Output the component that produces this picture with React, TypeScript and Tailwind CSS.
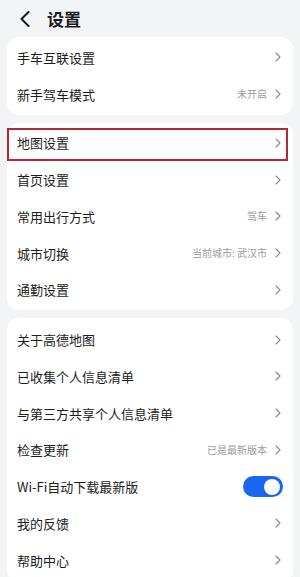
import React from 'react'

type Row = {
  label: string
  value?: string
  toggle?: boolean
  marked?: boolean
}

const groupOne: Row[] = [
  { label: '手车互联设置' },
  { label: '新手驾车模式', value: '未开启' },
]

const groupTwo: Row[] = [
  { label: '地图设置', marked: true },
  { label: '首页设置' },
  { label: '常用出行方式', value: '驾车' },
  { label: '城市切换', value: '当前城市: 武汉市' },
  { label: '通勤设置' },
]

const groupThree: Row[] = [
  { label: '关于高德地图' },
  { label: '已收集个人信息清单' },
  { label: '与第三方共享个人信息清单' },
  { label: '检查更新', value: '已是最新版本' },
  { label: 'Wi-Fi自动下载最新版', toggle: true },
  { label: '我的反馈' },
  { label: '帮助中心' },
]

function Chevron() {
  return (
    <svg width="6" height="10" viewBox="0 0 6 10" fill="none" className="shrink-0">
      <path d="M1 1l4 4-4 4" stroke="#8a8a8a" strokeWidth="1.1" strokeLinecap="round" strokeLinejoin="round" />
    </svg>
  )
}

function Toggle() {
  return (
    <div className="w-[40px] h-[21px] rounded-full bg-[#1b66ef] flex items-center justify-end pr-[3px] shrink-0">
      <div className="w-[16px] h-[16px] rounded-full bg-white" />
    </div>
  )
}

function SettingRow({ row }: { row: Row }) {
  return (
    <div className="relative h-[36.75px] flex items-center justify-between pl-[10px] pr-[12px]">
      <span className="text-[13px] text-[#1c1c1c] leading-none">{row.label}</span>
      {row.toggle ? (
        <div className="-mr-[2px]"><Toggle /></div>
      ) : (
        <div className="flex items-center gap-[8px]">
          {row.value && <span className="text-[10px] text-[#9b9b9b] leading-none">{row.value}</span>}
          <Chevron />
        </div>
      )}
      {row.marked && (
        <span className="absolute left-0 right-[5px] top-[3px] bottom-0 border-2 border-[#b8262e]" />
      )}
    </div>
  )
}

function Card({ rows, className }: { rows: Row[]; className?: string }) {
  return (
    <div className={`bg-white rounded-xl ${className ?? ''}`}>
      {rows.map((r) => (
        <SettingRow key={r.label} row={r} />
      ))}
    </div>
  )
}

export default function App() {
  return (
    <div
      className="w-[300px] h-[577px] overflow-hidden bg-[#f3f4f6]"
      style={{ fontFamily: '"Noto Sans CJK SC", "Noto Sans", sans-serif' }}
    >
      <div className="h-[37px] flex items-center pl-[19px] gap-[16px]">
        <svg width="12" height="16" viewBox="0 0 12 16" fill="none">
          <path d="M9.5 1L2.5 8l7 7" stroke="#1a1a1a" strokeWidth="2" strokeLinecap="round" strokeLinejoin="round" />
        </svg>
        <h1 className="text-[17px] font-semibold text-[#1a1a1a] leading-none">设置</h1>
      </div>
      <div className="px-[7px] flex flex-col gap-[8px]">
        <Card rows={groupOne} className="py-[2px]" />
        <Card rows={groupTwo} className="py-[2px]" />
        <Card rows={groupThree} className="pt-[3px] pb-[3px]" />
      </div>
    </div>
  )
}
